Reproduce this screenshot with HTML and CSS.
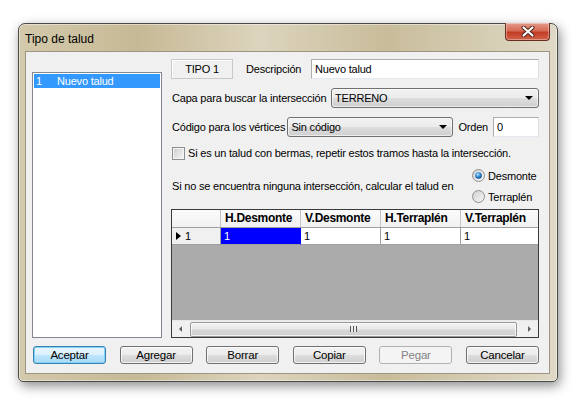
FILE: index.html
```html
<!DOCTYPE html>
<html lang="es">
<head>
<meta charset="utf-8">
<title>Tipo de talud</title>
<link rel="stylesheet" href="styles.css">
</head>
<body>
<div class="window">
  <div class="titlebar">
    <span class="title">Tipo de talud</span>
    <div class="close">
      <svg width="14" height="11" viewBox="0 0 14 11">
        <path d="M2.5 1.5 L11.5 9.5 M11.5 1.5 L2.5 9.5" stroke="#4a2018" stroke-width="4" stroke-linecap="round"/>
        <path d="M2.5 1.5 L11.5 9.5 M11.5 1.5 L2.5 9.5" stroke="#ffffff" stroke-width="2.2" stroke-linecap="round"/>
      </svg>
    </div>
  </div>
  <div class="client">
    <div class="main">
      <div class="listbox">
        <div class="item sel"><span class="num">1</span><span>Nuevo talud</span></div>
      </div>
      <div class="panel">
        <div class="row r1">
          <div class="tipo">TIPO 1</div>
          <span class="desc">Descripción</span>
          <div class="input desc-input">Nuevo talud</div>
        </div>
        <div class="row r2">
          <span>Capa para buscar la intersección</span>
          <div class="combo capa"><span>TERRENO</span><span class="arrow"></span></div>
        </div>
        <div class="row r3">
          <span>Código para los vértices</span>
          <div class="combo codigo"><span>Sin código</span><span class="arrow"></span></div>
          <span class="orden">Orden</span>
          <div class="input orden-input">0</div>
        </div>
        <div class="row r4">
          <span class="cb"></span>
          <span>Si es un talud con bermas, repetir estos tramos hasta la intersección.</span>
        </div>
        <div class="row r5">
          <span>Si no se encuentra ninguna intersección, calcular el talud en</span>
          <div class="radios">
            <div class="radio-row">
              <svg class="radio" width="13" height="13" viewBox="0 0 13 13">
                <defs>
                  <radialGradient id="rb" cx="0.4" cy="0.35" r="0.7">
                    <stop offset="0" stop-color="#bfe6ff"/>
                    <stop offset="0.5" stop-color="#2f8bd8"/>
                    <stop offset="1" stop-color="#0b3f7e"/>
                  </radialGradient>
                  <linearGradient id="rg" x1="0" y1="0" x2="1" y2="1">
                    <stop offset="0" stop-color="#d0d0d0"/>
                    <stop offset="1" stop-color="#f6f6f6"/>
                  </linearGradient>
                </defs>
                <circle cx="6.5" cy="6.5" r="6" fill="url(#rg)" stroke="#8e8f8f"/>
                <circle cx="6.5" cy="6.5" r="3.3" fill="url(#rb)"/>
              </svg>
              <span>Desmonte</span>
            </div>
            <div class="radio-row">
              <svg class="radio" width="13" height="13" viewBox="0 0 13 13">
                <circle cx="6.5" cy="6.5" r="6" fill="url(#rg)" stroke="#8e8f8f"/>
              </svg>
              <span>Terraplén</span>
            </div>
          </div>
        </div>
        <div class="grid">
          <div class="ghead">
            <div class="hc rh"></div>
            <div class="hc">H.Desmonte</div>
            <div class="hc">V.Desmonte</div>
            <div class="hc">H.Terraplén</div>
            <div class="hc last">V.Terraplén</div>
          </div>
          <div class="grow-row">
            <div class="dc rh"><span class="tri"></span>1</div>
            <div class="dc selcell">1</div>
            <div class="dc">1</div>
            <div class="dc">1</div>
            <div class="dc last">1</div>
          </div>
          <div class="gempty"></div>
          <div class="hscroll">
            <span class="sarrow left"></span>
            <div class="thumb"><span class="grip"></span></div>
            <span class="sarrow right"></span>
          </div>
        </div>
      </div>
    </div>
    <div class="buttons">
      <div class="btn default">Aceptar</div>
      <div class="btn">Agregar</div>
      <div class="btn">Borrar</div>
      <div class="btn">Copiar</div>
      <div class="btn disabled">Pegar</div>
      <div class="btn">Cancelar</div>
    </div>
  </div>
</div>
</body>
</html>
```

FILE: styles.css
```css
html, body {
  margin: 0;
  padding: 0;
  background: #ffffff;
}
body {
  font-family: "Liberation Sans", Arial, sans-serif;
  font-size: 11px;
  letter-spacing: -0.2px;
  color: #000;
  padding: 23px 0 0 18px;
  width: 584px;
  height: 404px;
  box-sizing: border-box;
  white-space: nowrap;
}
.window {
  width: 540px;
  height: 359px;
  box-sizing: border-box;
  border: 1px solid #4a4a48;
  border-radius: 7px 7px 5px 5px;
  background: linear-gradient(90deg, #d3c9ab 0%, #c6b995 22%, #dcd4bd 45%, #c8bc9a 68%, #d6ceb5 88%, #dfd9c6 100%);
  padding: 0 7px 7px 6px;
  display: flex;
  flex-direction: column;
  box-shadow: 2px 4px 12px rgba(0,0,0,0.45), inset 0 0 0 1px rgba(255,255,255,0.45);
}
.titlebar {
  height: 27px;
  display: flex;
  align-items: flex-start;
  justify-content: space-between;
}
.title {
  font-size: 12px;
  letter-spacing: 0;
  line-height: 16px;
  padding-top: 7px;
  color: #000;
}
.close {
  width: 45px;
  height: 18px;
  margin-top: -1px;
  box-sizing: border-box;
  border: 1px solid #6b2c20;
  border-top: none;
  border-radius: 0 0 4px 4px;
  background: linear-gradient(180deg, #e49a8a 0%, #d66a55 45%, #c43d25 55%, #d2624a 100%);
  box-shadow: inset 0 0 0 1px rgba(255,255,255,0.35);
  display: flex;
  align-items: center;
  justify-content: center;
}
.client {
  flex: 1;
  box-sizing: border-box;
  border: 1px solid #9b9582;
  background: #f0f0f0;
  padding: 7px 9px 9px 6px;
  display: flex;
  flex-direction: column;
}
.main {
  height: 279px;
  display: flex;
  gap: 9px;
}
.listbox {
  width: 130px;
  margin-top: 13px;
  box-sizing: border-box;
  border: 1px solid #828790;
  background: #fff;
  padding: 1px 1px;
}
.item {
  height: 14px;
  line-height: 14px;
  display: flex;
}
.item.sel {
  background: #3399ff;
  color: #fff;
}
.item .num {
  width: 23px;
  padding-left: 2px;
  box-sizing: border-box;
}
.panel {
  width: 368px;
  display: flex;
  flex-direction: column;
}
.row {
  display: flex;
  align-items: center;
  padding-left: 1px;
}
.r1, .r2, .r3 {
  height: 20px;
}
.r2, .r3, .r4, .r5 {
  margin-top: 9px;
}
.r1 {
  padding-left: 0;
}
.tipo {
  width: 62px;
  height: 20px;
  box-sizing: border-box;
  border: 1px solid #c9c9c9;
  box-shadow: inset 1px 1px 0 #fff;
  text-align: center;
  line-height: 18px;
}
.desc {
  margin-left: 13px;
}
.input {
  height: 20px;
  box-sizing: border-box;
  background: #fff;
  border: 1px solid #abadb3;
  border-bottom-color: #e3e9ef;
  border-right-color: #dbdfe6;
  line-height: 18px;
  padding-left: 3px;
}
.desc-input {
  width: 228px;
  margin-left: auto;
}
.combo {
  height: 20px;
  box-sizing: border-box;
  border: 1px solid #707070;
  border-radius: 3px;
  background: linear-gradient(180deg, #f2f2f2 0%, #ebebeb 50%, #dddddd 51%, #cfcfcf 100%);
  box-shadow: inset 0 0 0 1px rgba(255,255,255,0.6);
  display: flex;
  align-items: center;
  justify-content: space-between;
  padding: 0 5px 0 3px;
}
.arrow {
  width: 0;
  height: 0;
  border-left: 4px solid transparent;
  border-right: 4px solid transparent;
  border-top: 4px solid #000;
}
.capa {
  width: 208px;
  margin-left: auto;
}
.codigo {
  width: 166px;
  margin-left: auto;
}
.orden {
  margin-left: 5px;
}
.orden-input {
  width: 46px;
  margin-left: 5px;
}
.r4 {
  height: 14px;
}
.cb {
  width: 13px;
  height: 13px;
  box-sizing: border-box;
  border: 1px solid #8e8f8f;
  background: linear-gradient(135deg, #cbcbcb 0%, #e6e6e6 60%, #f5f5f5 100%);
  box-shadow: inset 0 0 0 1px #f4f4f4;
  margin-right: 3px;
}
.r5 {
  height: 34px;
}
.radios {
  margin-left: auto;
  width: 67px;
  display: flex;
  flex-direction: column;
  gap: 8px;
}
.radio-row {
  display: flex;
  align-items: center;
  gap: 3px;
  height: 13px;
}
.radio {
  display: block;
  flex: none;
}
.grid {
  margin-top: 6px;
  height: 129px;
  box-sizing: border-box;
  border: 1px solid #3a3a3a;
  display: flex;
  flex-direction: column;
  background: #ababab;
  overflow: hidden;
}
.ghead, .grow-row {
  display: grid;
  grid-template-columns: 49px 80px 80px 80px 77px;
}
.ghead {
  height: 18px;
  background: linear-gradient(180deg, #fbfbfb 0%, #f1f1f1 100%);
  border-bottom: 1px solid #a0a0a0;
  box-sizing: border-box;
}
.hc {
  font-weight: bold;
  font-size: 12px;
  letter-spacing: -0.3px;
  line-height: 17px;
  padding-left: 4px;
  border-right: 1px solid #c5c5c5;
  overflow: hidden;
}
.hc.last, .dc.last {
  border-right: none;
}
.grow-row {
  height: 17px;
  background: #fff;
}
.dc {
  line-height: 16px;
  padding-left: 3px;
  border-right: 1px solid #a0a0a0;
  border-bottom: 1px solid #a0a0a0;
  box-sizing: border-box;
}
.dc.rh {
  background: #f0f0f0;
  display: flex;
  align-items: center;
  padding-left: 4px;
}
.tri {
  width: 0;
  height: 0;
  border-top: 4px solid transparent;
  border-bottom: 4px solid transparent;
  border-left: 5px solid #000;
  margin-right: 4px;
}
.dc.selcell {
  background: #0000ff;
  color: #fff;
  border-right-color: #0000ff;
}
.gempty {
  flex: 1;
}
.hscroll {
  height: 17px;
  background: #f0f0f0;
  border-top: 1px solid #e8e8e8;
  box-sizing: border-box;
  display: flex;
  align-items: center;
}
.sarrow {
  width: 17px;
  height: 16px;
  display: flex;
  align-items: center;
  justify-content: center;
}
.sarrow.left::before {
  content: "";
  border-top: 3px solid transparent;
  border-bottom: 3px solid transparent;
  border-right: 3px solid #606060;
}
.sarrow.right::before {
  content: "";
  border-top: 3px solid transparent;
  border-bottom: 3px solid transparent;
  border-left: 3px solid #606060;
}
.thumb {
  flex: 1;
  height: 15px;
  margin: 0 4px 0 1px;
  box-sizing: border-box;
  border: 1px solid #979797;
  border-radius: 2px;
  background: linear-gradient(180deg, #f3f3f3 0%, #e8e8e8 45%, #d6d6d6 55%, #cfcfcf 100%);
  box-shadow: inset 0 0 0 1px rgba(255,255,255,0.7);
  display: flex;
  align-items: center;
  justify-content: center;
}
.grip {
  width: 7px;
  height: 6px;
  background: repeating-linear-gradient(90deg, #555 0 1px, #eee 1px 3px);
}
.buttons {
  margin-top: 8px;
  height: 18px;
  display: flex;
  justify-content: space-between;
  padding: 0 1px 0 1px;
}
.btn {
  width: 73px;
  height: 18px;
  box-sizing: border-box;
  border: 1px solid #707070;
  border-radius: 3px;
  background: linear-gradient(180deg, #f2f2f2 0%, #ebebeb 50%, #dddddd 51%, #cfcfcf 100%);
  box-shadow: inset 0 0 0 1px rgba(255,255,255,0.7);
  text-align: center;
  line-height: 16px;
  font-size: 11.5px;
}
.btn.default {
  border-color: #3c7fb1;
  box-shadow: inset 0 0 0 1px #7fd3f7;
  background: linear-gradient(180deg, #eaf6fd 0%, #d9f0fc 50%, #bee6fd 51%, #a7d9f5 100%);
}
.btn.disabled {
  border-color: #adb2b5;
  background: #f4f4f4;
  color: #838383;
  box-shadow: none;
}
```
